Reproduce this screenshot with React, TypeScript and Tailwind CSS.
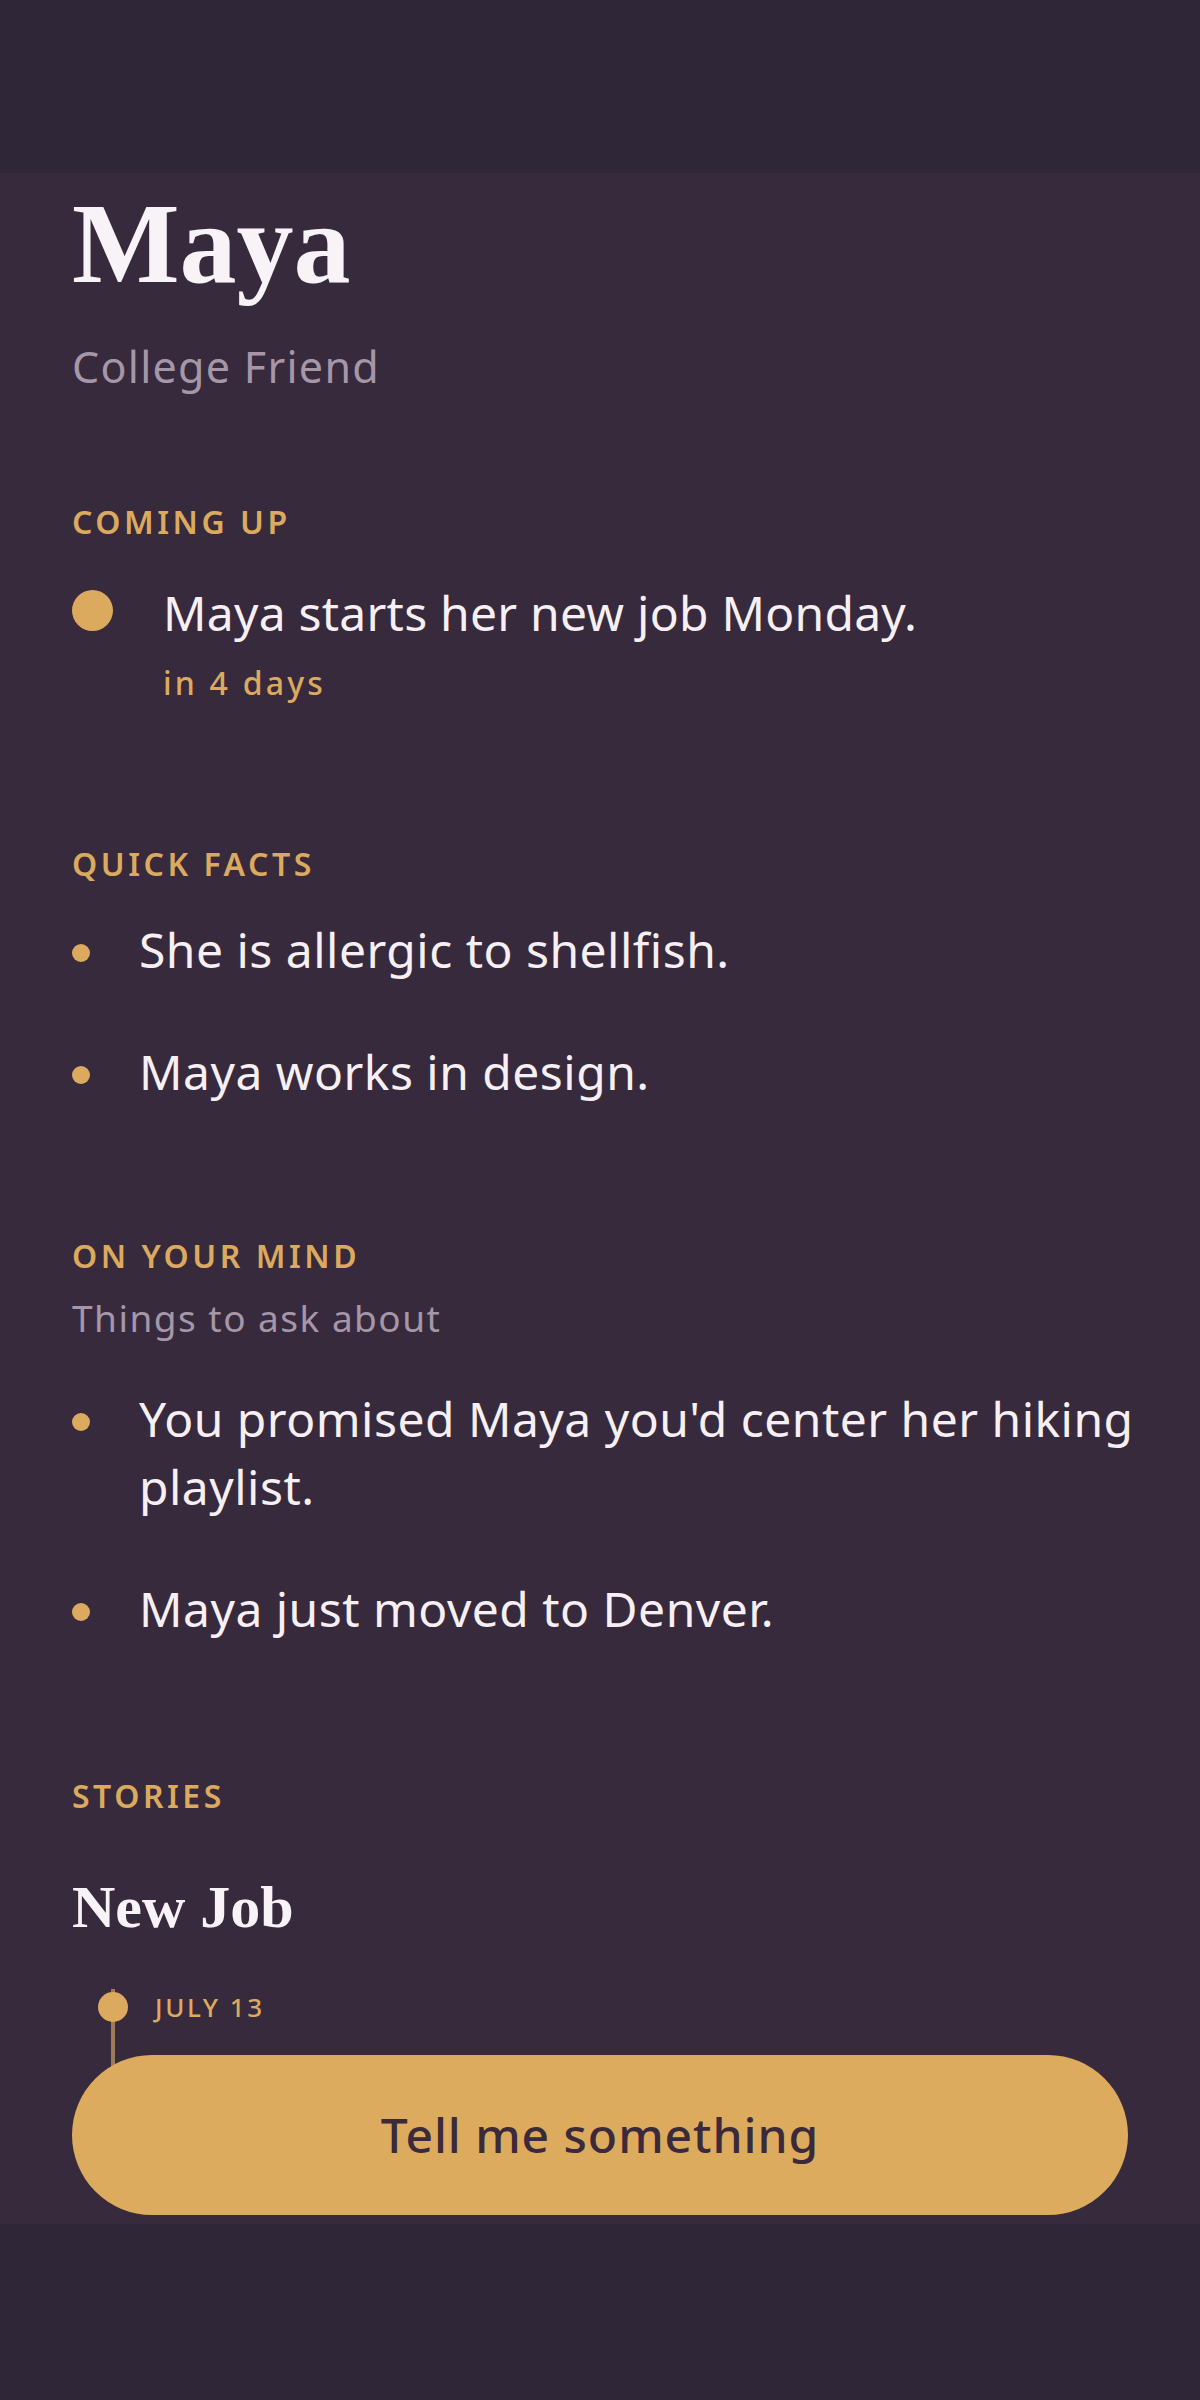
import React from 'react';

const sans = "font-['Noto_Sans',_'Open_Sans',_sans-serif]";
const serif = "font-['Liberation_Serif',_'DejaVu_Serif',_serif]";

const SectionLabel: React.FC<{ text: string; className?: string }> = ({ text, className }) => (
  <div className={`${sans} text-[32px] leading-[32px] font-semibold tracking-[0.11em] text-[#dcaa5e] ${className ?? ''}`}>
    {text}
  </div>
);

const Bullet: React.FC<{ text: string; top: string; className?: string }> = ({ text, top, className }) => (
  <div className={`flex items-start ${className ?? ''}`}>
    <span className={`w-[18px] h-[18px] rounded-full bg-[#dcaa5e] shrink-0 ${top}`} />
    <span className={`${sans} ml-[49px] text-[48px] leading-[68px] tracking-[0.01em] text-[#f6f0f4]`}>{text}</span>
  </div>
);

export default function App() {
  return (
    <div className="w-[1200px] h-[2400px] flex flex-col bg-[#2f2737]">
      <div className="h-[173px] shrink-0" />
      <main className="relative h-[2051px] shrink-0 overflow-hidden bg-[#382a3d] px-[72px] pt-[14px]">
        <h1 className={`${serif} text-[114px] leading-[114px] font-bold text-[#f8f3f6]`}>Maya</h1>
        <div className={`${sans} mt-[45px] text-[43px] leading-[42px] tracking-[0.03em] text-[#a597a8]`}>College Friend</div>

        <SectionLabel text="COMING UP" className="mt-[118px]" />
        <div className="flex items-start mt-[51px]">
          <span className="w-[41px] h-[41px] mt-[1px] rounded-full bg-[#dcaa5e] shrink-0" />
          <div className="ml-[50px]">
            <div className={`${sans} text-[48px] leading-[48px] tracking-[0.005em] text-[#f6f0f4]`}>Maya starts her new job Monday.</div>
            <div className={`${sans} mt-[30px] text-[32px] leading-[32px] font-medium tracking-[0.1em] text-[#dcaa5e]`}>
              in 4 days
            </div>
          </div>
        </div>

        <SectionLabel text="QUICK FACTS" className="mt-[149px]" />
        <div className="mt-[36px]">
          <Bullet text="She is allergic to shellfish." top="mt-[28px]" />
          <Bullet text="Maya works in design." top="mt-[28px]" className="mt-[54px]" />
        </div>

        <SectionLabel text="ON YOUR MIND" className="mt-[134px]" />
        <div className={`${sans} mt-[28px] text-[37px] leading-[36px] tracking-[0.04em] text-[#a597a8]`}>Things to ask about</div>
        <div className="mt-[49px] -mr-[30px]">
          <Bullet text="You promised Maya you'd center her hiking playlist." top="mt-[28px]" />
          <Bullet text="Maya just moved to Denver." top="mt-[28px]" className="mt-[54px]" />
        </div>

        <SectionLabel text="STORIES" className="mt-[137px]" />
        <h2 className={`${serif} mt-[65px] text-[60px] leading-[60px] font-bold text-[#f8f3f6]`}>New Job</h2>
        <div className="relative flex items-center mt-[55px] h-[30px]">
          <span className="absolute left-[39px] top-[-3px] w-[4px] h-[120px] bg-[#9b7b57]" />
          <span className="relative ml-[26px] w-[30px] h-[30px] rounded-full bg-[#dcaa5e]" />
          <span className={`${sans} ml-[27px] text-[26px] leading-[30px] font-medium tracking-[0.1em] text-[#dcaa5e]`}>
            JULY 13
          </span>
        </div>

        <button
          className={`${sans} absolute left-[72px] right-[72px] bottom-[9px] h-[160px] rounded-full bg-[#dcab5e] text-[48px] font-medium tracking-[0.02em] text-[#3a2a3c]`}
        >
          Tell me something
        </button>
      </main>
      <div className="flex-1" />
    </div>
  );
}
